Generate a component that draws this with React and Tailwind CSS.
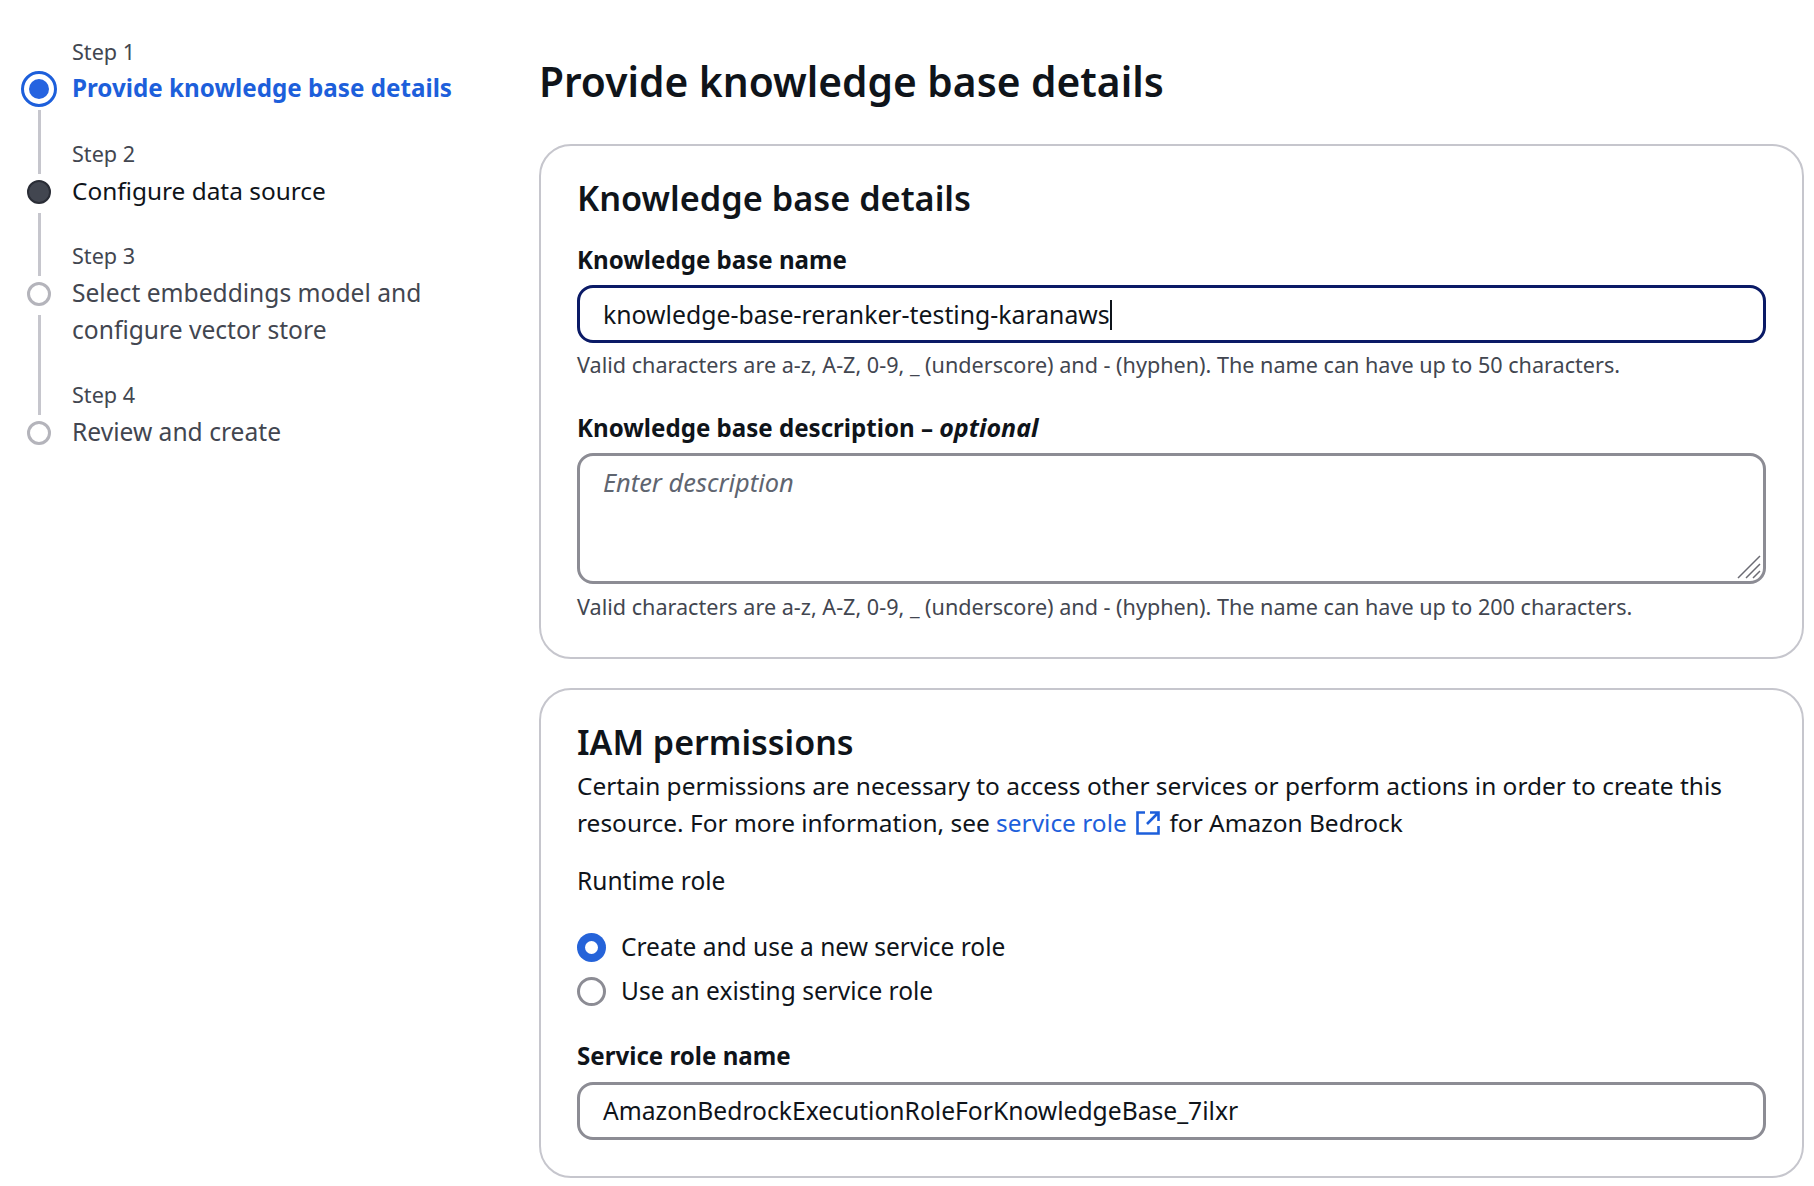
import React from "react";

const steps = [
  { label: "Step 1", title: ["Provide knowledge base details"], state: "active" },
  { label: "Step 2", title: ["Configure data source"], state: "next" },
  { label: "Step 3", title: ["Select embeddings model and", "configure vector store"], state: "todo" },
  { label: "Step 4", title: ["Review and create"], state: "todo" },
];

const Dot = ({ state }) => {
  if (state === "active") {
    return (
      <div className="flex h-[36px] w-[36px] items-center justify-center rounded-full border-[3px] border-[#1d5fdb]">
        <div className="h-[20px] w-[20px] rounded-full bg-[#2563e0]" />
      </div>
    );
  }
  if (state === "next") {
    return <div className="my-[6px] h-[24px] w-[24px] rounded-full border-[2px] border-[#2a2d36] bg-[#424650]" />;
  }
  return <div className="my-[6px] h-[24px] w-[24px] rounded-full border-[3px] border-[#b4b4bb] bg-white" />;
};

const StepNav = () => (
  <nav className="w-[539px] shrink-0 pt-[34px] pl-[21px]">
    {steps.map((step, i) => (
      <div key={step.label} className="flex">
        <div className="flex w-[36px] shrink-0 flex-col items-center">
          <div className={`h-[37px] w-[3px] ${i > 0 ? "bg-[#c6c6cd]" : ""}`} />
          <Dot state={step.state} />
          {i < steps.length - 1 && <div className="mt-[3px] w-[3px] flex-1 bg-[#c6c6cd]" />}
        </div>
        <div className={`pl-[15px] ${i < steps.length - 1 ? "pb-[30px]" : ""}`}>
          <div className={`h-[36px] text-[21.6px] text-[#424650] ${i === 0 ? "leading-[36px]" : "leading-[34px]"}`}>
            {step.label}
          </div>
          {step.title.map((line) => (
            <div
              key={line}
              className={`leading-[36.5px] ${
                step.state === "active"
                  ? "text-[24.2px] font-bold text-[#1d5fdb]"
                  : step.state === "next"
                    ? "text-[24.4px] text-[#0f141a]"
                    : "text-[24.6px] text-[#424650]"
              }`}
            >
              {line}
            </div>
          ))}
        </div>
      </div>
    ))}
  </nav>
);

const Card = ({ className, children }) => (
  <section className={`rounded-[32px] border-2 border-[#c6c6cd] bg-white px-[36px] ${className}`}>{children}</section>
);

const Hint = ({ className, children }) => (
  <p className={`text-[21.6px] leading-[30px] text-[#424650] ${className}`}>{children}</p>
);

const Label = ({ children }) => <div className="text-[24.1px] leading-[36px] font-bold text-[#0f141a]">{children}</div>;

const Radio = ({ on, children }) => (
  <div className="flex h-[44px] items-center gap-[15px] text-[24.5px] text-[#0f141a]">
    {on ? (
      <div className="flex h-[29px] w-[29px] items-center justify-center rounded-full bg-[#2563d9]">
        <div className="h-[13px] w-[13px] rounded-full bg-white" />
      </div>
    ) : (
      <div className="h-[29px] w-[29px] rounded-full border-[3px] border-[#8c8c94] bg-white" />
    )}
    {children}
  </div>
);

const ExternalIcon = () => (
  <svg
    className="mr-[3px] ml-[3px] inline-block h-[24px] w-[24px] align-[-3px]"
    viewBox="0 0 24 24"
    fill="none"
    stroke="#1d5fdb"
    strokeWidth="2.6"
  >
    <path d="M9 1.5H1.5v21h21V15" />
    <path d="M14 1.5h8.5V10M22.5 1.5 11 13" />
  </svg>
);

export default function App() {
  return (
    <div className="flex min-h-[1186px] bg-white font-['Noto_Sans',sans-serif] text-[#0f141a]">
      <StepNav />
      <main className="min-w-0 flex-1 pr-[10px]">
        <h1 className="pt-[53px] pb-[34px] text-[40.7px] leading-[57px] font-semibold">Provide knowledge base details</h1>

        <Card className="h-[515px] pt-[30px]">
          <h2 className="text-[34.3px] leading-[44px] font-semibold">Knowledge base details</h2>
          <div className="mt-[22px]">
            <Label>Knowledge base name</Label>
            <div className="mt-[7px] flex h-[58px] items-center rounded-[16px] border-[3px] border-[#0a1a66] pt-[2px] pl-[23px] text-[24.8px]">
              knowledge-base-reranker-testing-karanaws
              <span className="h-[30px] w-[2px] bg-[#0f141a]" />
            </div>
            <Hint className="mt-[7px]">
              Valid characters are a-z, A-Z, 0-9, _ (underscore) and - (hyphen). The name can have up to 50 characters.
            </Hint>
          </div>
          <div className="mt-[29px]">
            <Label>
              Knowledge base description – <em className="text-[25px] font-bold">optional</em>
            </Label>
            <div className="relative mt-[7px] h-[131px]">
              <textarea
                readOnly
                placeholder="Enter description"
                className="block h-full w-full resize-none rounded-[16px] border-[3px] border-[#8c8c94] pt-[7px] pr-[22px] pl-[23px] text-[25.4px] italic outline-none placeholder:text-[#5f6570]"
              />
              <svg className="absolute right-[5px] bottom-[5px] h-[24px] w-[24px]" viewBox="0 0 24 24" stroke="#6b6b73" strokeWidth="1.5">
                <path d="M1 23 23 1M9 23 23 9M16 23 23 16" />
              </svg>
            </div>
            <Hint className="mt-[8px]">
              Valid characters are a-z, A-Z, 0-9, _ (underscore) and - (hyphen). The name can have up to 200 characters.
            </Hint>
          </div>
        </Card>

        <Card className="mt-[29px] h-[490px] pt-[30px]">
          <h2 className="text-[34px] leading-[44px] font-semibold">IAM permissions</h2>
          <p className="mt-[4px] text-[24.45px] leading-[36.5px]">
            Certain permissions are necessary to access other services or perform actions in order to create this
            <br />
            resource. For more information, see <span className="text-[#1d5fdb]">service role</span>{" "}
            <ExternalIcon /> for Amazon Bedrock
          </p>
          <div className="mt-[22px] text-[24.5px] leading-[36px]">Runtime role</div>
          <div className="mt-[26px]">
            <Radio on>Create and use a new service role</Radio>
            <Radio>Use an existing service role</Radio>
          </div>
          <div className="mt-[25px]">
            <Label>Service role name</Label>
            <div className="mt-[8px] flex h-[58px] items-center rounded-[16px] border-[3px] border-[#8c8c94] pl-[23px] text-[24.65px]">
              AmazonBedrockExecutionRoleForKnowledgeBase_7ilxr
            </div>
          </div>
        </Card>
      </main>
    </div>
  );
}
